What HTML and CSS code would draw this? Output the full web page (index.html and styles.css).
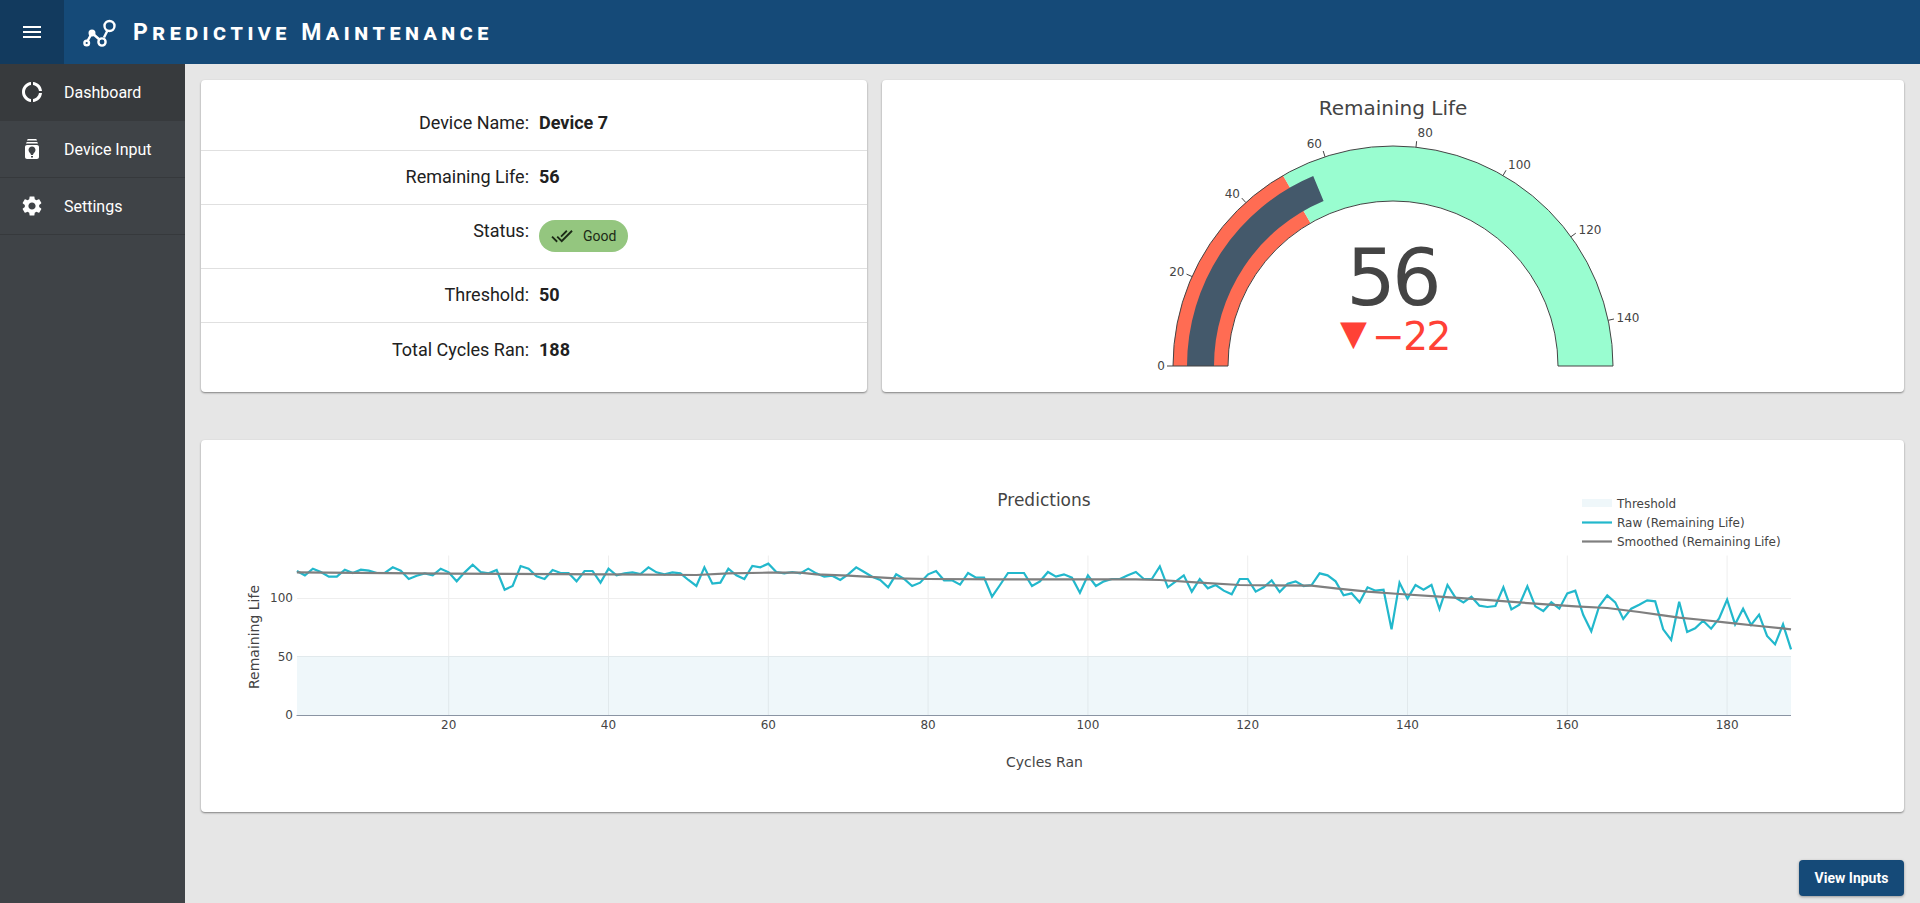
FILE: index.html
```html
<!DOCTYPE html>
<html lang="en">
<head>
<meta charset="utf-8">
<title>Predictive Maintenance</title>
<link rel="stylesheet" href="styles.css">
</head>
<body>
<header class="topbar">
  <button class="menu-btn" aria-label="Menu"><svg class="icon" viewBox="0 0 24 24"><path d="M3 18h18v-2H3v2zm0-5h18v-2H3v2zm0-7v2h18V6H3z"/></svg></button>
  <svg class="logo" viewBox="70 8 60 45">
    <g fill="none" stroke="#fff" stroke-width="2.4">
      <path d="M87.5 39 92 31 100 38M104 35.5 107.5 28.5"/>
      <circle cx="109.500" cy="24" r="5"/>
      <circle cx="102" cy="40" r="3.600"/>
      <circle cx="92" cy="31" r="2.300"/>
      <circle cx="86.700" cy="41" r="2.300"/>
    </g>
  </svg>
  <h1 class="brand">Predictive Maintenance</h1>
</header>
<div class="shell">
  <nav class="sidebar">
    <a class="nav-item active"><svg class="icon" viewBox="0 0 24 24"><path d="M11 5.080V2c-5 .5-9 4.810-9 10s4 9.500 9 10v-3.080c-3-.48-6-3.400-6-6.920s3-6.440 6-6.920zM18.970 11H22c-.47-5-4-8.530-9-9v3.080C16 5.510 18.540 8 18.970 11zM13 18.920V22c5-.47 8.530-4 9-9h-3.030c-.43 3-2.970 5.490-5.970 5.920z"/></svg><span>Dashboard</span></a>
    <a class="nav-item"><svg class="icon" viewBox="0 0 24 24"><path d="M17 8H7c-1.100 0-2 .9-2 2v10c0 1.100.9 2 2 2h10c1.100 0 2-.9 2-2V10c0-1.100-.9-2-2-2zm-4 12.500h-2V19h2v1.500zm0-2.500h-2c0-1.500-2.500-3-2.500-5 0-1.930 1.570-3.500 3.500-3.500s3.500 1.570 3.500 3.500c0 2-2.500 3.500-2.500 5zm5-11.500H6C6 5.670 6.670 5 7.500 5h9c.83 0 1.500.67 1.500 1.500zm-1-3H7C7 2.670 7.670 2 8.500 2h7c.83 0 1.500.67 1.500 1.500z"/></svg><span>Device Input</span></a>
    <a class="nav-item"><svg class="icon" viewBox="0 0 24 24"><path d="M19.140 12.940c.04-.3.06-.61.06-.94 0-.32-.02-.64-.07-.94l2.030-1.580c.18-.14.23-.41.12-.61l-1.920-3.320c-.12-.22-.37-.29-.59-.22l-2.390.96c-.5-.38-1.030-.7-1.620-.94l-.36-2.540c-.04-.24-.24-.41-.48-.41h-3.840c-.24 0-.43.17-.47.41l-.36 2.540c-.59.24-1.130.57-1.620.94l-2.390-.96c-.22-.08-.47 0-.59.22L2.740 8.870c-.12.21-.08.47.12.61l2.030 1.580c-.05.3-.09.63-.09.94s.02.64.07.94l-2.030 1.580c-.18.14-.23.41-.12.61l1.920 3.320c.12.22.37.29.59.22l2.390-.96c.5.38 1.030.7 1.620.94l.36 2.540c.05.24.24.41.48.41h3.840c.24 0 .44-.17.47-.41l.36-2.540c.59-.24 1.130-.56 1.620-.94l2.390.96c.22.08.47 0 .59-.22l1.920-3.320c.12-.22.07-.47-.12-.61l-2.010-1.580zM12 15.600c-1.980 0-3.600-1.620-3.600-3.600s1.620-3.600 3.600-3.600 3.600 1.620 3.600 3.600-1.620 3.600-3.600 3.600z"/></svg><span>Settings</span></a>
  </nav>
  <main class="content">
    <div class="top-row">
      <section class="card details">
        <div class="row"><span class="label">Device Name:</span><span class="value">Device 7</span></div>
        <div class="row"><span class="label">Remaining Life:</span><span class="value">56</span></div>
        <div class="row"><span class="label">Status:</span>
          <span class="chip"><svg class="chip-icon" viewBox="0 0 24 24"><path d="M18 7l-1.410-1.410-6.340 6.340 1.410 1.410L18 7zm4.240-1.410L11.660 16.170 7.480 12l-1.410 1.410L11.660 19l12-12-1.420-1.410zM.41 13.410L6 19l1.410-1.410L1.830 12 .41 13.410z"/></svg>Good</span>
        </div>
        <div class="row"><span class="label">Threshold:</span><span class="value">50</span></div>
        <div class="row"><span class="label">Total Cycles Ran:</span><span class="value">188</span></div>
      </section>
      <section class="card gauge-card">
        <svg class="chart" viewBox="882 80 1022 312">
          <text class="gauge-title" x="1393" y="115" text-anchor="middle">Remaining Life</text>
          <path fill="#ff6c53" d="M1173 366A220 220 0 0 1 1283 175.500L1310.500 223.100A165 165 0 0 0 1228 366Z"/>
          <path fill="#99fdd0" d="M1283 175.500A220 220 0 0 1 1613 366H1558A165 165 0 0 0 1310.500 223.100Z"/>
          <path fill="#44596b" d="M1187 366A206 206 0 0 1 1313.200 176.100L1323.600 201A179 179 0 0 0 1214 366Z"/>
          <path fill="none" stroke="#444" stroke-width="1" d="M1173 366A220 220 0 0 1 1613 366H1558A165 165 0 0 0 1228 366H1173Z"/>
          <g stroke="#444" stroke-width="1">
            <path d="M1173 366H1167M1192 276.500 1186.500 274.100M1245.800 202.500 1241.800 198.100M1325 156.800 1323.200 151M1416 147.200 1416.600 141.200M1503 175.500 1506 170.300M1571 236.700 1575.800 233.200M1608.200 320.300 1614 319"/>
          </g>
          <g class="tick">
            <text x="1165" y="370" text-anchor="end">0</text>
            <text x="1184.500" y="276" text-anchor="end">20</text>
            <text x="1240" y="198" text-anchor="end">40</text>
            <text x="1322" y="148" text-anchor="end">60</text>
            <text x="1417.500" y="137">80</text>
            <text x="1508" y="169">100</text>
            <text x="1578.500" y="234">120</text>
            <text x="1616.500" y="322">140</text>
          </g>
          <text class="gauge-number" x="1392" y="305" text-anchor="middle">56</text>
          <text class="gauge-delta"><tspan class="delta-arrow" x="1340" y="344.500">▼</tspan><tspan class="delta-value" x="1372" y="350">−22</tspan></text>
        </svg>
      </section>
    </div>
    <section class="card chart-card">
      <svg class="chart" viewBox="201 440 1703 372">
        <text class="chart-title" x="1044" y="506" text-anchor="middle">Predictions</text>
        <g stroke="#eee" stroke-width="1">
          <path d="M448.700 555.500V715M608.500 555.500V715M768.300 555.500V715M928.100 555.500V715M1087.900 555.500V715M1247.700 555.500V715M1407.500 555.500V715M1567.300 555.500V715M1727.100 555.500V715"/>
          <path d="M297 598.500H1791M297 656.500H1791"/>
        </g>
        <rect x="297" y="656" width="1494" height="59" fill="#add8e6" fill-opacity="0.2"/>
        <path d="M296.500 715.500H1791" stroke="#8a94a3" stroke-width="1"/>
        <g transform="translate(288.910 540) scale(7.990 0.33333)" fill="none">
          <polyline class="raw" points="1,93 2,106 3,86 4,96 5,110 6,110 7,89 8,99 9,89 10,92 11,99 12,99 13,82 14,92 15,117 16,107 17,100 18,106 19,86 20,97 21,124 22,97 23,74 24,96 25,100 26,90 27,149 28,138 29,78 30,86 31,109 32,117 33,90 34,99 35,99 36,124 37,93 38,93 39,128 40,86 41,106 42,100 43,97 44,102 45,82 46,97 47,103 48,97 49,100 50,120 51,138 52,82 53,131 54,128 55,86 56,106 57,117 58,78 59,82 60,71 61,96 62,100 63,96 64,100 65,86 66,100 67,110 68,107 69,120 70,103 71,82 72,96 73,110 74,120 75,142 76,103 77,117 78,138 79,128 80,103 81,93 82,121 83,121 84,134 85,99 86,113 87,113 88,170 89,135 90,99 91,99 92,99 93,138 94,124 95,96 96,110 97,103 98,113 99,158 100,106 101,138 102,124 103,117 104,117 105,106 106,96 107,117 108,117 109,79 110,142 111,124 112,106 113,155 114,117 115,145 116,135 117,152 118,163 119,117 120,117 121,155 122,142 123,121 124,156 125,131 126,124 127,138 128,135 129,100 130,106 131,124 132,166 133,160 134,187 135,142 136,152 137,149 138,268 139,128 140,176 141,135 142,149 143,135 144,207 145,135 146,173 147,187 148,170 149,197 150,201 151,198 152,142 153,208 154,194 155,139 156,199 157,213 158,187 159,206 160,160 161,152 162,225 163,274 164,198 165,166 166,187 167,237 168,206 169,194 170,181 171,184 172,268 173,300 174,185 175,276 176,265 177,242 178,266 179,235 180,179 181,253 182,206 183,255 184,224 185,288 186,313 187,253 188,328"/>
          <polyline class="smooth" points="1,97 20,101 40,103 51,105 55,100 60,98 64,98 66,103 70,107 76,115 80,117 89,118 104,118 106,118 109,120 114,128 119,135 123,136 128,137 131,145 135,155 139,162 144,170 149,178 156,191 161,199 165,204 169,216 172,226 174,233 177,240 180,248 184,258 188,268"/>
        </g>
        <g class="tick">
          <text x="293" y="602" text-anchor="end">100</text>
          <text x="293" y="661" text-anchor="end">50</text>
          <text x="293" y="719" text-anchor="end">0</text>
          <text x="448.700" y="729" text-anchor="middle">20</text>
          <text x="608.500" y="729" text-anchor="middle">40</text>
          <text x="768.300" y="729" text-anchor="middle">60</text>
          <text x="928.100" y="729" text-anchor="middle">80</text>
          <text x="1087.900" y="729" text-anchor="middle">100</text>
          <text x="1247.700" y="729" text-anchor="middle">120</text>
          <text x="1407.500" y="729" text-anchor="middle">140</text>
          <text x="1567.300" y="729" text-anchor="middle">160</text>
          <text x="1727.100" y="729" text-anchor="middle">180</text>
        </g>
        <text class="axis-title" x="1044.500" y="767" text-anchor="middle">Cycles Ran</text>
        <text class="axis-title" transform="translate(259 637) rotate(-90)" text-anchor="middle">Remaining Life</text>
        <rect x="1582" y="499" width="30" height="8" fill="#add8e6" fill-opacity="0.2"/>
        <path d="M1582 522.500H1612" class="legend-raw"/>
        <path d="M1582 541.500H1612" class="legend-smooth"/>
        <g class="tick">
          <text x="1617" y="508">Threshold</text>
          <text x="1617" y="527">Raw (Remaining Life)</text>
          <text x="1617" y="546">Smoothed (Remaining Life)</text>
        </g>
      </svg>
    </section>
    <div class="actions"><button class="primary-btn">View Inputs</button></div>
  </main>
</div>
</body>
</html>
```
FILE: styles.css
```css
* { box-sizing: border-box; }
html, body { margin: 0; height: 100%; }
body {
  font-family: Roboto, "Liberation Sans", sans-serif;
  background: #e6e6e6;
  overflow: hidden;
  color: #212121;
}
.topbar {
  height: 64px;
  background: #154a78;
  display: flex;
  align-items: center;
  color: #fff;
}
.menu-btn {
  width: 64px;
  height: 64px;
  border: 0;
  padding: 0;
  background: #123a5e;
  display: flex;
  align-items: center;
  justify-content: center;
}
.icon { width: 24px; height: 24px; fill: #fff; display: block; flex: none; }
.logo { width: 60px; height: 45px; margin-left: 6px; display: block; flex: none; }
.brand {
  margin: 0 0 0 3px;
  font-size: 23px;
  line-height: 1;
  font-weight: 700;
  font-variant: small-caps;
  letter-spacing: 4.5px;
  white-space: nowrap;
}
.shell { display: flex; height: 839px; }
.sidebar { width: 185px; flex: none; background: #3f4347; }
.nav-item {
  height: 57px;
  display: flex;
  align-items: center;
  gap: 20px;
  padding-left: 20px;
  color: #fff;
  font-size: 16px;
  border-bottom: 1px solid #36393c;
}
.nav-item.active { background: #373a3d; border-bottom-color: #373a3d; }
.content { flex: 1; padding: 16px 16px 0; min-width: 0; }
.top-row { display: grid; grid-template-columns: 666px 1fr; gap: 15px; height: 312px; }
.card {
  background: #fff;
  border-radius: 4px;
  box-shadow: 0 1px 2px rgba(0, 0, 0, 0.45);
}
.details { padding: 16px 0; }
.row {
  display: flex;
  align-items: flex-start;
  gap: 10px;
  padding: 16px 0;
  border-bottom: 1px solid #e0e0e0;
  font-size: 18px;
  line-height: 21px;
}
.row:nth-child(1) { padding-bottom: 17px; }
.row:nth-child(2) { padding-top: 15px; padding-bottom: 17px; }
.row:nth-child(3) { padding-top: 15px; padding-bottom: 16px; }
.row:nth-child(4) { padding-top: 15px; padding-bottom: 17px; }
.row:last-child { border-bottom: 0; }
.label { width: 328px; text-align: right; flex: none; }
.value { font-weight: 700; }
.chip {
  width: 89px;
  height: 32px;
  border-radius: 16px;
  background: #94c67f;
  display: flex;
  align-items: center;
  padding-left: 12px;
  gap: 10px;
  font-size: 14px;
  font-weight: 400;
  color: #1c2a16;
}
.chip-icon { width: 22px; height: 22px; fill: #1c2a16; flex: none; }
.gauge-card, .chart-card { overflow: hidden; }
.chart { display: block; width: 100%; height: 100%; font-family: "DejaVu Sans", Verdana, sans-serif; }
.chart-card { height: 372px; margin-top: 48px; }
.gauge-title { font-size: 20px; fill: #444; }
.tick { font-size: 12px; fill: #444; }
.gauge-number { font-size: 78px; letter-spacing: -4px; fill: #444; }
.gauge-delta { fill: #ff4136; }
.delta-arrow { font-size: 35px; }
.delta-value { font-size: 39px; letter-spacing: -1.5px; }
.chart-title { font-size: 17px; fill: #444; }
.axis-title { font-size: 14px; fill: #444; }
.raw, .legend-raw { fill: none; stroke: #22b8cc; stroke-width: 2.2; vector-effect: non-scaling-stroke; }
.smooth, .legend-smooth { fill: none; stroke: #7f7f7f; stroke-width: 2.2; vector-effect: non-scaling-stroke; }
.actions { display: flex; justify-content: flex-end; margin-top: 48px; }
.primary-btn {
  width: 105px;
  height: 36px;
  border: 0;
  border-radius: 4px;
  background: #154a78;
  color: #fff;
  font-family: Roboto, "Liberation Sans", sans-serif;
  font-size: 14px;
  font-weight: 700;
  box-shadow: 0 1px 3px rgba(0, 0, 0, 0.35);
}
```
